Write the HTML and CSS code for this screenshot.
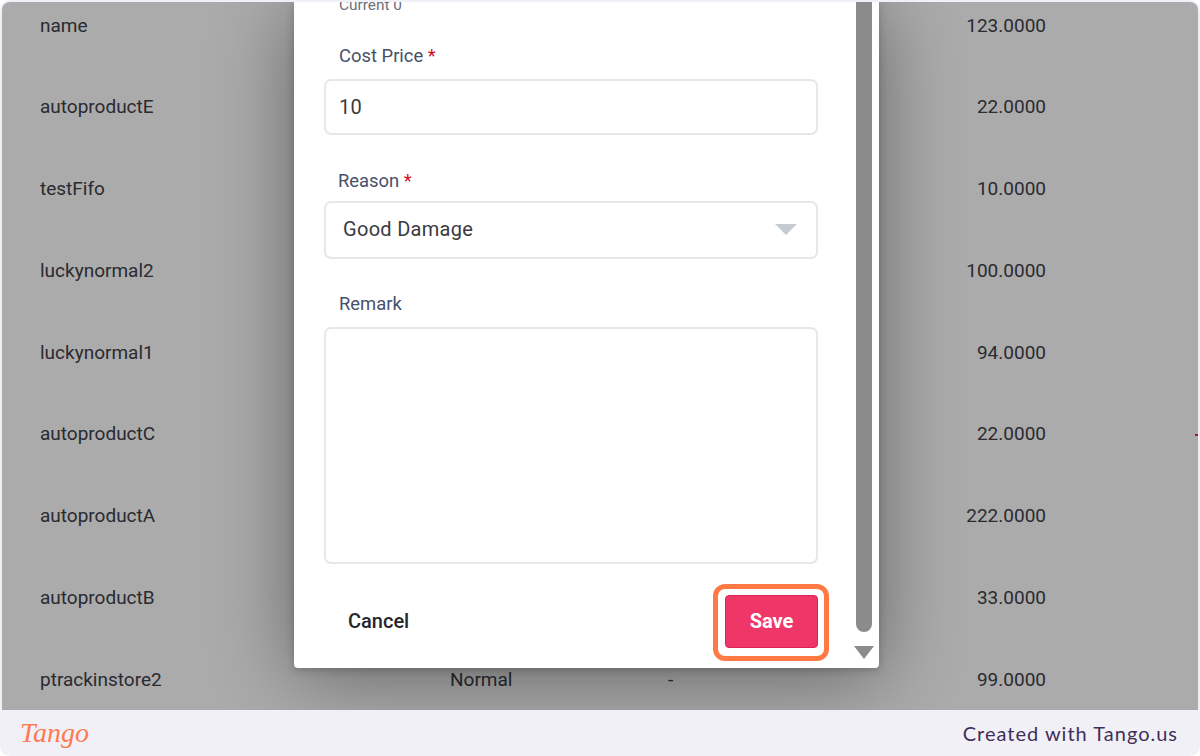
FILE: index.html
```html
<!DOCTYPE html>
<html lang="en">
<head>
<meta charset="utf-8">
<title>Stock adjustment</title>
<link rel="stylesheet" href="styles.css">
</head>
<body>
<div class="frame">
  <main class="screen">
    <div class="table">
      <div class="row"><span>name</span><span></span><span></span><span class="num">123.0000</span></div>
      <div class="row"><span>autoproductE</span><span></span><span></span><span class="num">22.0000</span></div>
      <div class="row"><span>testFifo</span><span></span><span></span><span class="num">10.0000</span></div>
      <div class="row"><span>luckynormal2</span><span></span><span></span><span class="num">100.0000</span></div>
      <div class="row"><span>luckynormal1</span><span></span><span></span><span class="num">94.0000</span></div>
      <div class="row"><span>autoproductC</span><span></span><span></span><span class="num">22.0000</span><i class="tick"></i></div>
      <div class="row"><span>autoproductA</span><span></span><span></span><span class="num">222.0000</span></div>
      <div class="row"><span>autoproductB</span><span></span><span></span><span class="num">33.0000</span></div>
      <div class="row"><span>ptrackinstore2</span><span>Normal</span><span>-</span><span class="num">99.0000</span></div>
    </div>
    <div class="overlay">
      <section class="modal">
        <form class="form">
          <div class="current">Current 0</div>
          <label class="label label-cost">Cost Price <b>*</b></label>
          <div class="field field-input">10</div>
          <label class="label label-reason">Reason <b>*</b></label>
          <div class="field field-select"><span>Good Damage</span><i class="caret"></i></div>
          <label class="label label-remark">Remark</label>
          <div class="field field-area"></div>
          <div class="actions">
            <span class="cancel">Cancel</span>
            <span class="ring"><span class="save">Save</span></span>
          </div>
        </form>
        <div class="scrollbar">
          <div class="thumb"></div>
          <i class="arrow"></i>
        </div>
      </section>
    </div>
  </main>
  <footer class="footer">
    <span class="logo">Tango</span>
    <span class="credit">Created with Tango.us</span>
  </footer>
</div>
</body>
</html>
```
FILE: styles.css
```css
* { box-sizing: border-box; }
html, body { margin: 0; height: 100%; background: #fff; }
.frame {
  width: 1200px; height: 756px; background: #f2f0f7; border-radius: 10px;
  padding: 2px 2px 0; display: flex; flex-direction: column; overflow: hidden;
  font-family: Roboto, sans-serif;
}
.screen {
  position: relative; height: 708px; overflow: hidden; background: #fff;
  border-radius: 8px 8px 0 0;
}
.table { margin-top: -17.8px; color: #40404a; font-size: 19px; }
.row {
  position: relative; height: 81.75px; padding: 0 152px 0 38px;
  display: grid; grid-template-columns: 410px 218px 1fr 200px; align-items: center;
}
.num { text-align: right; }
.tick { position: absolute; right: 0; top: 50%; width: 3px; height: 2px; background: #ff2020; }
.overlay {
  position: absolute; inset: 0; background: rgba(0,0,0,.33);
  padding-left: 292px;
}
.modal {
  width: 585px; height: 666px; background: #fff; border-radius: 0 0 4px 4px;
  box-shadow: 0 8px 80px rgba(0,0,0,.42), 0 2px 8px rgba(0,0,0,.2);
  display: flex; overflow: hidden;
}
.form { width: 562px; padding: 0 38px 0 30px; display: flex; flex-direction: column; }
.current { height: 9px; line-height: 6px; font-size: 15.4px; color: #6b6f78; padding-left: 15px; }
.label { display: block; font-size: 18.4px; line-height: 22px; color: #47506b; padding-left: 15px; }
.label b { color: #d0101c; font-weight: 400; }
.label-cost { margin-top: 34px; }
.label-reason { margin-top: 35px; padding-left: 14px; }
.label-remark { margin-top: 34px; }
.field { border: 2px solid #e6e7ea; border-radius: 7px; background: #fff; color: #3a3a3f; font-size: 20px; letter-spacing: .3px; }
.field-input { margin-top: 12px; height: 56px; padding: 0 13px; display: flex; align-items: center; }
.field-select { margin-top: 9px; height: 58px; padding: 0 19px 2px 17px; display: flex; align-items: center; justify-content: space-between; }
.field-area { margin-top: 12px; height: 237px; }
.caret { width: 0; height: 0; border-left: 11.5px solid transparent; border-right: 11.5px solid transparent; border-top: 11px solid #c5cad3; }
.actions { margin-top: 20px; display: flex; align-items: center; justify-content: space-between; padding-left: 24px; margin-right: -11px; }
.cancel { font-size: 20px; font-weight: 500; color: #26262b; margin-bottom: 4px; }
.ring { display: block; width: 116px; height: 77px; border: 5px solid #ff7a45; border-radius: 12px; padding: 6px 6px 8px 7px; background: #fff; }
.save {
  display: flex; align-items: center; justify-content: center; height: 100%; padding-bottom: 2px;
  background: #ee3768; border: 1px solid #e01f55; border-radius: 4px;
  color: #fff; font-size: 20px; font-weight: 700;
}
.scrollbar { width: 16px; display: flex; flex-direction: column; align-items: center; }
.thumb { width: 16px; height: 630px; background: #8b8b8b; border-radius: 0 0 8px 8px; }
.arrow { margin-top: 14px; width: 0; height: 0; border-left: 10px solid transparent; border-right: 10px solid transparent; border-top: 13px solid #8b8b8b; }
.footer { flex: 1; display: flex; align-items: center; justify-content: space-between; padding: 0 20px 0 18px; }
.logo { font-family: "Liberation Serif", serif; font-style: italic; font-size: 28px; color: #ff7a50; }
.credit { font-family: Lato, sans-serif; font-size: 20px; letter-spacing: 1px; color: #3f2f5a; }
```
